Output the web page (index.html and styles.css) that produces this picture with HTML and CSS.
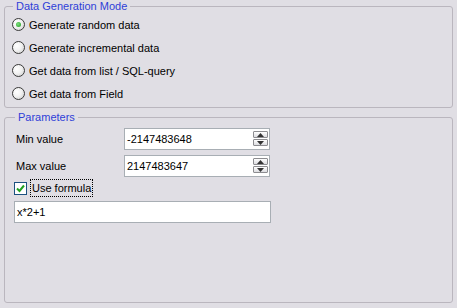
FILE: index.html
```html
<!DOCTYPE html>
<html lang="en">
<head>
    <meta charset="UTF-8">
    <title>Data Generation</title>
    <link rel="stylesheet" href="styles.css">
</head>
<body>
    <fieldset class="group mode">
        <legend>Data Generation Mode</legend>
        <div class="option"><span class="radio checked"><span class="dot"></span></span>Generate random data</div>
        <div class="option"><span class="radio"></span>Generate incremental data</div>
        <div class="option"><span class="radio"></span>Get data from list / SQL-query</div>
        <div class="option"><span class="radio"></span>Get data from Field</div>
    </fieldset>

    <fieldset class="group params">
        <legend>Parameters</legend>
        <div class="params-body">
            <div class="row">
                <span class="label">Min value</span>
                <div class="spin">
                    <span class="value">-2147483648</span>
                    <div class="spin-btns">
                        <span class="spin-btn"><svg width="7" height="4" viewBox="0 0 7 4"><path d="M3.5 0 L7 4 L0 4 Z" fill="#333"/></svg></span>
                        <span class="spin-btn"><svg width="7" height="4" viewBox="0 0 7 4"><path d="M0 0 L7 0 L3.5 4 Z" fill="#333"/></svg></span>
                    </div>
                </div>
            </div>
            <div class="row">
                <span class="label">Max value</span>
                <div class="spin">
                    <span class="value">2147483647</span>
                    <div class="spin-btns">
                        <span class="spin-btn"><svg width="7" height="4" viewBox="0 0 7 4"><path d="M3.5 0 L7 4 L0 4 Z" fill="#333"/></svg></span>
                        <span class="spin-btn"><svg width="7" height="4" viewBox="0 0 7 4"><path d="M0 0 L7 0 L3.5 4 Z" fill="#333"/></svg></span>
                    </div>
                </div>
            </div>
            <div class="check-row">
                <span class="checkbox"><svg width="11" height="11" viewBox="0 0 11 11"><path d="M2 5.5 L4.5 8 L9 2.5" stroke="#21a121" stroke-width="2" fill="none"/></svg></span>
                <span class="check-label">Use formula</span>
            </div>
            <div class="formula">x*2+1</div>
        </div>
    </fieldset>
</body>
</html>
```

FILE: styles.css
```css
body {
    margin: 0;
    background-color: #e0dee4;
    font-family: "Liberation Sans", Arial, sans-serif;
    font-size: 11px;
    color: #000;
}

.group {
    margin: 0 4px;
    border: 1px solid #bab6be;
    border-radius: 3px;
    padding: 0 0 0 7px;
}

.group legend {
    margin-left: 1px;
    padding: 0 3px;
    line-height: 13px;
    color: #2f3fd8;
}

.mode {
    padding-bottom: 2px;
}

.option {
    display: flex;
    align-items: center;
    gap: 4px;
    height: 23px;
}

.radio {
    width: 11px;
    height: 11px;
    border: 1px solid #3a3a3a;
    border-radius: 50%;
    background: radial-gradient(circle at 35% 35%, #ffffff 0%, #f2f2f2 45%, #c9c9c9 100%);
    display: flex;
    align-items: center;
    justify-content: center;
}

.radio .dot {
    width: 5px;
    height: 5px;
    border-radius: 50%;
    background: radial-gradient(circle at 40% 40%, #7fe07f, #1c9a1c);
}

.params {
    margin-top: 3px;
    padding-left: 9px;
}

.params-body {
    padding-top: 4px;
    height: 174px;
}

.row {
    display: flex;
    align-items: center;
    height: 22px;
    margin-bottom: 5px;
}

.label {
    width: 108px;
    padding-left: 2px;
}

.spin {
    display: flex;
    width: 144px;
    height: 20px;
    border: 1px solid #a8aeb4;
    background-color: #fff;
}

.value {
    flex: 1;
    padding-left: 2px;
    line-height: 20px;
}

.spin-btns {
    display: flex;
    flex-direction: column;
    margin: 2px 1px 0 0;
}

.spin-btn {
    width: 13px;
    height: 5px;
    border: 1px solid #8c8c90;
    border-radius: 1px;
    background: linear-gradient(#ffffff, #dcdce0);
    display: flex;
    align-items: center;
    justify-content: center;
}

.spin-btn + .spin-btn {
    margin-top: 1px;
}

.check-row {
    display: flex;
    align-items: center;
    height: 18px;
    margin-top: -3px;
}

.checkbox {
    width: 11px;
    height: 11px;
    border: 1px solid #1c5180;
    background-color: #fff;
    display: flex;
}

.check-label {
    margin-left: 3px;
    padding: 2px 1px 2px 1px;
    border: 1px dotted #000;
}

.formula {
    margin-top: 4px;
    width: 253px;
    height: 20px;
    line-height: 20px;
    padding-left: 2px;
    border: 1px solid #a8aeb4;
    background-color: #fff;
}
```
